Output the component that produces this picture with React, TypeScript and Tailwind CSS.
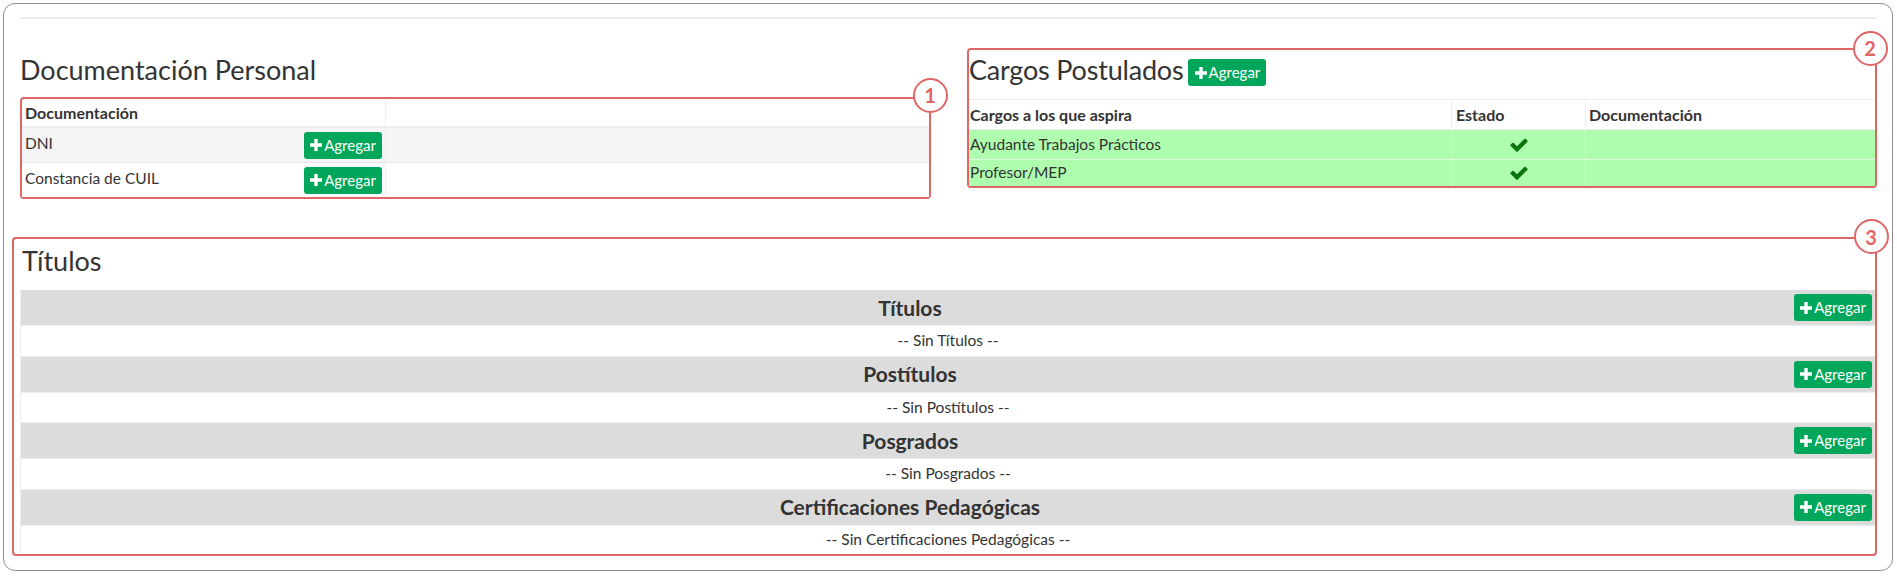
function PlusIcon() {
  return (
    <svg viewBox="0 0 12 12" className="h-[12px] w-[12px]" fill="currentColor">
      <path d="M4.3 0h3.4v4.3H12v3.4H7.7V12H4.3V7.7H0V4.3h4.3z" />
    </svg>
  );
}

function CheckIcon() {
  return (
    <svg viewBox="121 270 1550 1260" className="h-[14px] w-[18px]" fill="#0a730a">
      <path d="M1671 566q0 40-28 68l-724 724-136 136q-28 28-68 28t-68-28l-136-136-362-362q-28-28-28-68t28-68l136-136q28-28 68-28t68 28l294 295 656-657q28-28 68-28t68 28l136 136q28 28 28 68z" />
    </svg>
  );
}

function AddButton() {
  return (
    <button
      type="button"
      className="flex h-[27px] w-[78px] items-center justify-center gap-[2px] rounded-[3px] bg-[#00a65a] text-[15px] leading-none text-white"
    >
      <PlusIcon />
      <span>Agregar</span>
    </button>
  );
}

function Badge({ n, className }: { n: string; className: string }) {
  return (
    <span
      className={
        "absolute flex h-[35px] w-[35px] items-center justify-center rounded-full border-2 border-[#e06666] bg-white text-[20px] font-bold leading-none text-[#e06666] " +
        className
      }
    >
      {n}
    </span>
  );
}

const documentos = ["DNI", "Constancia de CUIL"];

const cargos = [
  { nombre: "Ayudante Trabajos Prácticos", h: "h-[30px]" },
  { nombre: "Profesor/MEP", h: "h-[26px]" },
];

const secciones = [
  { titulo: "Títulos", vacio: "-- Sin Títulos --" },
  { titulo: "Postítulos", vacio: "-- Sin Postítulos --" },
  { titulo: "Posgrados", vacio: "-- Sin Posgrados --" },
  { titulo: "Certificaciones Pedagógicas", vacio: "-- Sin Certificaciones Pedagógicas --" },
];

export default function App() {
  return (
    <div className="bg-white p-[3px] font-['Lato',sans-serif] text-[#333]">
      <div className="h-[568px] w-[1890px] rounded-[12px] border border-[#8e8e8e] pt-[13px] pl-[16px] pr-[15px]">
        <div className="h-[2px] bg-[#eeeeee]" />

        <div className="mt-[29px] flex justify-between">
          {/* Documentación personal */}
          <section className="w-[911px] pt-[6px]">
            <h3 className="h-[32px] text-[27px] leading-[32px]">Documentación Personal</h3>
            <div className="relative mt-[11px] rounded-[4px] border-2 border-[#e06666]">
              <Badge n="1" className="-right-[18.5px] -top-[21.5px]" />
              <div className="grid h-[29px] grid-cols-[278px_85px_1fr] border-b-2 border-[#eeeeee] text-[16px] font-bold">
                <div className="flex items-center pl-[3px]">Documentación</div>
                <div />
                <div className="border-l border-[#eeeeee]" />
              </div>
              {documentos.map((d, i) => (
                <div
                  key={d}
                  className={
                    "grid grid-cols-[278px_85px_1fr] text-[15.5px] " +
                    (i === 0 ? "h-[35px] border-b border-[#e6e6e6] bg-[#f5f5f5]" : "h-[34px] bg-white")
                  }
                >
                  <div className="flex items-center pl-[3px] pb-[2px]">{d}</div>
                  <div className="flex items-center pl-[4px]">
                    <AddButton />
                  </div>
                  <div className="border-l border-[#eeeeee]" />
                </div>
              ))}
            </div>
          </section>

          {/* Cargos postulados */}
          <section className="relative h-[140px] w-[910px] rounded-[4px] border-2 border-[#e06666]">
            <Badge n="2" className="-right-[12.5px] -top-[19.5px]" />
            <div className="flex h-[49px] items-start gap-[5px] pt-[4px]">
              <h3 className="h-[32px] text-[27px] leading-[32px] tracking-[-0.2px]">Cargos Postulados</h3>
              <div className="mt-[5px]">
                <AddButton />
              </div>
            </div>
            <div className="grid h-[31px] grid-cols-[482px_134px_1fr] border-y border-[#eeeeee] text-[16px] font-bold">
              <div className="flex items-center pl-[1px]">Cargos a los que aspira</div>
              <div className="flex items-center border-l border-[#eeeeee] pl-[4px]">Estado</div>
              <div className="flex items-center border-l border-[#eeeeee] pl-[3px]">Documentación</div>
            </div>
            {cargos.map((c, i) => (
              <div
                key={c.nombre}
                className={
                  "grid grid-cols-[482px_134px_1fr] bg-[#aefdae] text-[15.5px] " +
                  c.h +
                  (i === 0 ? " border-b border-[#e4f7e4]" : "")
                }
              >
                <div className="flex items-center pl-[1px]">{c.nombre}</div>
                <div className="flex items-center justify-center border-l border-[#e4f7e4]">
                  <CheckIcon />
                </div>
                <div className="border-l border-[#e4f7e4]" />
              </div>
            ))}
          </section>
        </div>

        {/* Títulos */}
        <section className="relative -ml-[8px] mt-[38px] h-[319px] rounded-[4px] border-2 border-[#e06666] pt-[6px] pl-[6px]">
          <Badge n="3" className="-right-[13.5px] -top-[20px]" />
          <h3 className="h-[32px] pl-[2px] text-[27px] leading-[32px]">Títulos</h3>
          <div className="mt-[13px] border-l border-[#eeeeee]">
            {secciones.map((s, i) => (
              <div key={s.titulo}>
                <div className="flex h-[36px] items-center border-b border-[#eeeeee] bg-[#dcdcdc]">
                  <div className="flex-1 pl-[5px] text-center text-[21px] font-bold text-[#333]">{s.titulo}</div>
                  <div className="flex w-[81px] justify-end pr-[3px]">
                    <AddButton />
                  </div>
                </div>
                <div
                  className={
                    "flex items-center justify-center text-[15.5px] " +
                    (i === 3 ? "h-[28px]" : "h-[30.5px] border-b border-[#eeeeee]")
                  }
                >
                  {s.vacio}
                </div>
              </div>
            ))}
          </div>
        </section>
      </div>
    </div>
  );
}
